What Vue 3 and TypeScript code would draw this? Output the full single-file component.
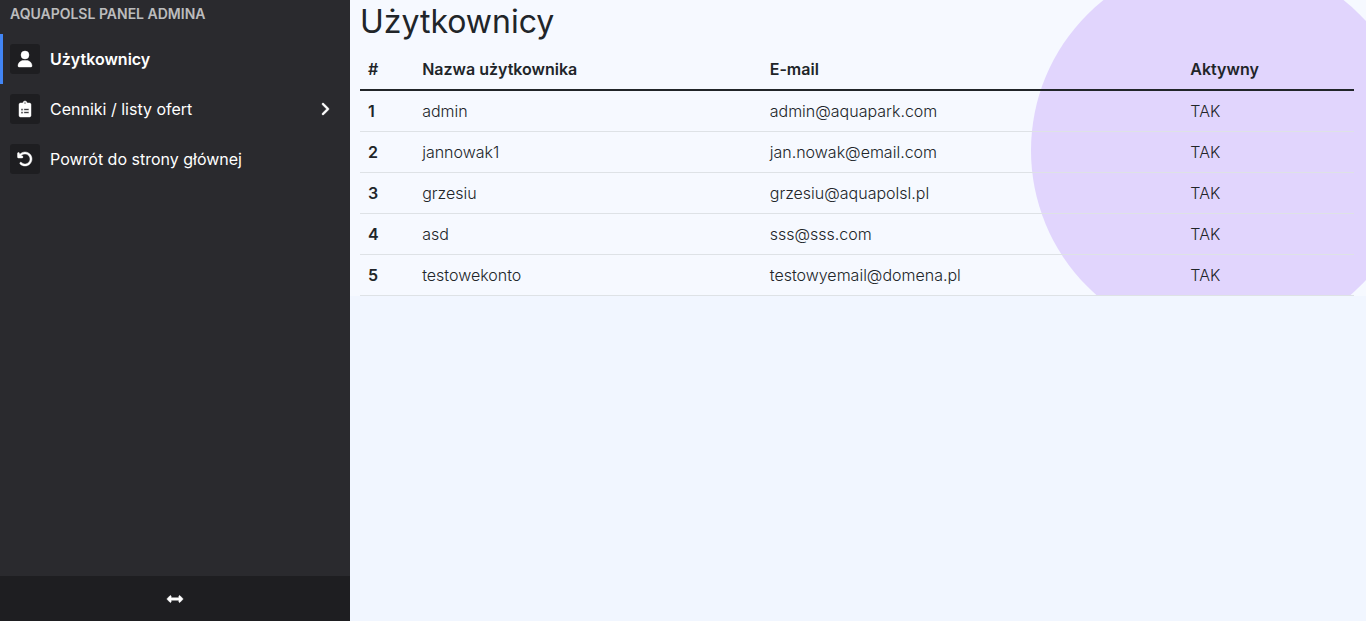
<script setup lang="ts">
interface User {
  name: string
  email: string
  active: boolean
}

const users: User[] = [
  { name: 'admin', email: 'admin@aquapark.com', active: true },
  { name: 'jannowak1', email: 'jan.nowak@email.com', active: true },
  { name: 'grzesiu', email: 'grzesiu@aquapolsl.pl', active: true },
  { name: 'asd', email: 'sss@sss.com', active: true },
  { name: 'testowekonto', email: 'testowyemail@domena.pl', active: true },
]

interface MenuItem {
  label: string
  viewBox: string
  icon: string
  current?: boolean
  expandable?: boolean
}

const menu: MenuItem[] = [
  {
    label: 'Użytkownicy',
    viewBox: '0 0 448 512',
    icon: 'M224 256a128 128 0 1 0 0-256 128 128 0 1 0 0 256zM173 304C78 304 0 382 0 477c0 19 16 35 35 35h378c19 0 35-16 35-35 0-95-78-173-173-173z',
    current: true,
  },
  {
    label: 'Cenniki / listy ofert',
    viewBox: '0 0 384 512',
    icon: 'M336 64h-80c0-35-29-64-64-64s-64 29-64 64H48c-26 0-48 22-48 48v352c0 26 22 48 48 48h288c26 0 48-22 48-48V112c0-26-22-48-48-48zM192 36c15 0 28 13 28 28s-13 28-28 28-28-13-28-28 13-28 28-28zM66 244h60v56H66zM156 246h160v52H156zM66 340h60v56H66zM156 342h160v52H156z',
    expandable: true,
  },
  {
    label: 'Powrót do strony głównej',
    viewBox: '0 0 512 512',
    icon: 'M125 160h35c18 0 32 14 32 32s-14 32-32 32H48c-18 0-32-14-32-32V80c0-18 14-32 32-32s32 14 32 32v35l18-17c87-88 229-88 316 0s88 229 0 316-229 88-316 0c-13-12-13-32 0-45s32-13 45 0c63 63 164 63 227 0s62-163 0-226-164-62-227 0z',
  },
]
</script>

<template>
  <div class="layout">
    <aside class="sidebar">
      <div class="brand">AQUAPOLSL PANEL ADMINA</div>
      <nav class="menu">
        <a
          v-for="item in menu"
          :key="item.label"
          href="#"
          class="item"
          :class="{ current: item.current }"
          :aria-current="item.current ? 'page' : undefined"
        >
          <span class="tile">
            <svg :viewBox="item.viewBox" aria-hidden="true"><path :d="item.icon" fill-rule="evenodd" /></svg>
          </span>
          <span class="label">{{ item.label }}</span>
          <svg v-if="item.expandable" class="chevron" viewBox="0 0 320 512" aria-hidden="true">
            <path d="M278 234c12 12 12 33 0 45L118 439c-13 12-33 12-46 0s-12-33 0-46l138-137L73 119c-13-13-13-33 0-46s33-12 45 0z" />
          </svg>
        </a>
      </nav>
      <button class="toggle" type="button" aria-label="Zwiń menu">
        <svg viewBox="0 0 512 512" aria-hidden="true">
          <path d="M377.941 169.941V216H134.059v-46.059c0-21.382-25.851-32.09-40.971-16.971L7.029 239.029c-9.373 9.373-9.373 24.568 0 33.941l86.059 86.059c15.119 15.119 40.971 4.411 40.971-16.971V296h243.882v46.059c0 21.382 25.851 32.09 40.971 16.971l86.059-86.059c9.373-9.373 9.373-24.568 0-33.941l-86.059-86.059c-15.119-15.12-40.971-4.412-40.971 16.97z" />
        </svg>
      </button>
    </aside>

    <main class="content">
      <section class="panel">
        <h2>Użytkownicy</h2>
        <table>
          <thead>
            <tr>
              <th scope="col">#</th>
              <th scope="col">Nazwa użytkownika</th>
              <th scope="col">E-mail</th>
              <th scope="col">Aktywny</th>
            </tr>
          </thead>
          <tbody>
            <tr v-for="(user, index) in users" :key="user.name">
              <th scope="row">{{ index + 1 }}</th>
              <td>{{ user.name }}</td>
              <td>{{ user.email }}</td>
              <td>{{ user.active ? 'TAK' : 'NIE' }}</td>
            </tr>
          </tbody>
        </table>
      </section>
    </main>
  </div>
</template>

<style>
body {
  margin: 0;
  background: #f1f6ff;
}
</style>

<style scoped>
.layout {
  display: flex;
  min-height: 100vh;
  font-family: Inter, sans-serif;
  font-size: 16px;
  line-height: 24px;
  color: #212529;
}

.sidebar {
  display: flex;
  flex: none;
  flex-direction: column;
  width: 350px;
  background: #2a2a2e;
  color: #fff;
}

.brand {
  padding: 3px 10px 10px;
  font-size: 14px;
  font-weight: 600;
  line-height: 21px;
  color: rgba(255, 255, 255, 0.7);
}

.menu {
  flex: 1;
}

.item {
  display: flex;
  align-items: center;
  gap: 10px;
  box-sizing: border-box;
  height: 50px;
  padding: 10px;
  color: #fff;
  text-decoration: none;
}

.current {
  font-weight: 600;
  box-shadow: inset 3px 0 #4285f4;
}

.tile {
  display: flex;
  align-items: center;
  justify-content: center;
  width: 30px;
  height: 30px;
  border-radius: 3px;
  background: #1e1e21;
}

svg {
  height: 16px;
  overflow: visible;
  fill: currentColor;
  stroke: currentColor;
  stroke-width: 14;
}

.label {
  flex: 1;
}

.chevron {
  width: 30px;
}

.toggle {
  display: flex;
  align-items: center;
  justify-content: center;
  height: 45px;
  padding: 0;
  border: 0;
  background: #1e1e21;
  color: #fff;
}

.content {
  flex: 1;
}

.panel {
  position: relative;
  overflow: hidden;
  padding: 2px 12px 0 10px;
  background: #f6f9ff;
}

.panel::before {
  content: '';
  position: absolute;
  top: -42px;
  right: -50px;
  width: 385px;
  height: 385px;
  border-radius: 50%;
  background: #e1d5fd;
}

h2 {
  position: relative;
  margin: 0 0 8px;
  font-size: 32px;
  font-weight: 400;
  line-height: 39px;
}

table {
  position: relative;
  width: 100%;
  border-collapse: collapse;
  font-weight: 300;
}

th,
td {
  padding: 8px;
  border-bottom: 1px solid #dee2e6;
  text-align: left;
}

th {
  font-weight: 600;
}

thead th {
  border-bottom: 2px solid #212529;
}
</style>
